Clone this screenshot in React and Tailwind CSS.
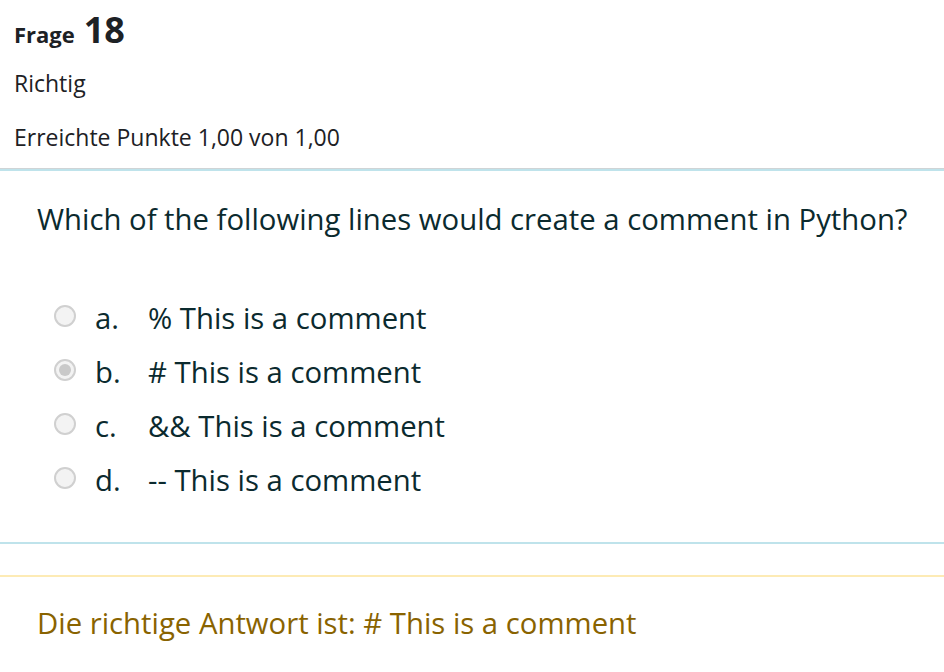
export default function App() {
  const options = [
    { letter: "a.", text: "% This is a comment", checked: false },
    { letter: "b.", text: "# This is a comment", checked: true },
    { letter: "c.", text: "&& This is a comment", checked: false },
    { letter: "d.", text: "-- This is a comment", checked: false },
  ];

  return (
    <div className="w-[944px] h-[672px] overflow-hidden bg-white text-[#1d2125] font-['Open_Sans',sans-serif]">
      {/* info block */}
      <div className="pl-[14px] pt-[8px] h-[169px] border-b border-[#cfd4d6]">
        <h3 className="font-bold leading-[44px] flex items-baseline gap-[9px]">
          <span className="text-[22px]">Frage</span>
          <span className="text-[36px]">18</span>
        </h3>
        <div className="text-[23px] leading-[28px] mt-[13px]">Richtig</div>
        <div className="text-[23px] leading-[28px] mt-[26px]">Erreichte Punkte 1,00 von 1,00</div>
      </div>

      {/* formulation */}
      <div className="border-t-[2px] border-[#bfe3eb] border-b-[2px] pb-[41px] text-[#0b2a2e]">
        <div className="pl-[37px] pt-[28px] text-[29.3px] leading-[40px]">
          Which of the following lines would create a comment in Python?
        </div>
        <div className="mt-[60px] pl-[54px] flex flex-col gap-[14px]">
          {options.map((o) => (
            <label key={o.letter} className="flex items-center h-[40px] text-[29.3px]">
              <span className="w-[22px] h-[22px] rounded-full border-[2px] border-[#d0d0d0] bg-[#f3f3f3] flex items-center justify-center shrink-0 -mt-[6px]">
                {o.checked && <span className="w-[12px] h-[12px] rounded-full bg-[#c9c9c9]" />}
              </span>
              <span className="ml-[19px] w-[53px]">{o.letter}</span>
              <span>{o.text}</span>
            </label>
          ))}
        </div>
      </div>

      {/* feedback */}
      <div className="mt-[31px] border-t-[2px] border-[#fdebb5] pl-[37px] pt-[26px] text-[29.3px] leading-[40px] text-[#896300]">
        Die richtige Antwort ist: # This is a comment
      </div>
    </div>
  );
}
